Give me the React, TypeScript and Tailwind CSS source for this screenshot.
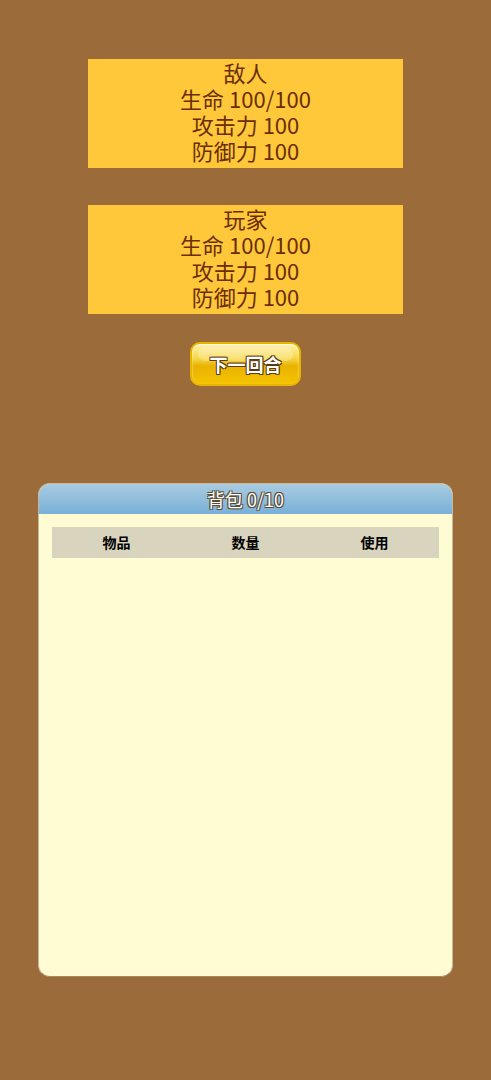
const FONT = "font-['Noto_Sans_CJK_SC',sans-serif]";

function StatBox({ name }: { name: string }) {
  return (
    <div className="w-[315px] h-[109px] pb-[6px] bg-[#ffc83a] flex flex-col items-center justify-center text-[22px] leading-[26px] text-[#6b2e04]">
      <div>{name}</div>
      <div>生命 100/100</div>
      <div>攻击力 100</div>
      <div>防御力 100</div>
    </div>
  );
}

export default function App() {
  return (
    <div className={`min-h-screen w-full bg-[#9c6b3a] flex flex-col items-center ${FONT}`}>
      <div className="mt-[59px]">
        <StatBox name="敌人" />
      </div>
      <div className="mt-[37px]">
        <StatBox name="玩家" />
      </div>

      <button className="relative mt-[28px] w-[111px] h-[44px] rounded-[10px] border-2 border-[#e8b400] bg-[linear-gradient(to_bottom,#fff1a8_0%,#f7d84a_35%,#e9b200_55%,#f5c400_100%)] shadow-[inset_0_1px_2px_rgba(255,255,255,0.8)] flex items-center justify-center">
        <span className="absolute left-[6px] right-[6px] top-[3px] h-[14px] rounded-[8px] bg-white/25" />
        <span className="relative text-[18px] font-bold text-white [text-shadow:-1px_-1px_0_#5a3a10,1px_-1px_0_#5a3a10,-1px_1px_0_#5a3a10,1px_1px_0_#5a3a10]">
          下一回合
        </span>
      </button>

      <div className="mt-[97px] w-[415px] h-[494px] rounded-[12px] overflow-hidden bg-[#fffbd3] border border-[#c9b99a] border-b-[#a88a5a] flex flex-col">
        <div className="h-[30px] bg-[linear-gradient(to_bottom,#a9cbe0,#78b0d8)] flex items-center justify-center">
          <span className="text-[18px] text-white [text-shadow:-1px_-1px_0_#5a4a30,1px_-1px_0_#5a4a30,-1px_1px_0_#5a4a30,1px_1px_0_#5a4a30]">
            背包 0/10
          </span>
        </div>
        <div className="px-[13px] pt-[13px]">
          <div className="h-[31px] bg-[#d9d4bd] grid grid-cols-3 items-center text-center text-[14px] font-bold text-black">
            <div>物品</div>
            <div>数量</div>
            <div>使用</div>
          </div>
        </div>
      </div>
    </div>
  );
}
